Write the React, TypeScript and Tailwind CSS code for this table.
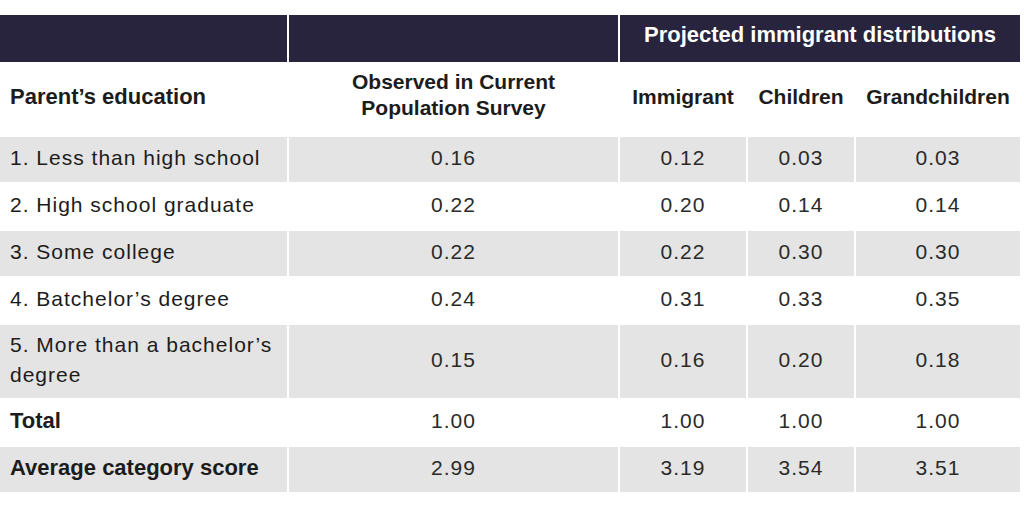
import React from "react";

const rows: { label: string; vals: string[]; bold?: boolean; gray: boolean; tall?: boolean }[] = [
  { label: "1. Less than high school", vals: ["0.16", "0.12", "0.03", "0.03"], gray: true },
  { label: "2. High school graduate", vals: ["0.22", "0.20", "0.14", "0.14"], gray: false },
  { label: "3. Some college", vals: ["0.22", "0.22", "0.30", "0.30"], gray: true },
  { label: "4. Batchelor\u2019s degree", vals: ["0.24", "0.31", "0.33", "0.35"], gray: false },
  { label: "5. More than a bachelor\u2019s degree", vals: ["0.15", "0.16", "0.20", "0.18"], gray: true, tall: true },
  { label: "Total", vals: ["1.00", "1.00", "1.00", "1.00"], gray: false, bold: true },
  { label: "Average category score", vals: ["2.99", "3.19", "3.54", "3.51"], gray: true, bold: true },
];

export default function App() {
  return (
    <div
      className="w-[1024px] h-[512px] bg-white overflow-hidden pt-[15px] text-[#1c1c1c]"
      style={{ fontFamily: '"Liberation Sans", Arial, sans-serif' }}
    >
      <div className="grid w-[1020px] grid-cols-[287px_329px_126px_106px_164px] gap-x-[2px] gap-y-[2px]">
        {/* dark header */}
        <div className="h-[47px] bg-[#29243d]" />
        <div className="h-[47px] bg-[#29243d]" />
        <div className="col-span-3 h-[47px] bg-[#29243d] flex items-center justify-center pb-[9px] text-white font-bold text-[22px]">
          Projected immigrant distributions
        </div>
        {/* sub header */}
        <div className="h-[71px] flex items-center pl-[10px] pb-[6px] font-bold text-[22px]">Parent’s education</div>
        <div className="h-[71px] flex items-center justify-center pb-[10px] text-center font-bold text-[21px] leading-[26px]">
          Observed in Current
          <br />
          Population Survey
        </div>
        <div className="h-[71px] flex items-center justify-center pb-[6px] font-bold text-[21px]">Immigrant</div>
        <div className="h-[71px] flex items-center justify-center pb-[6px] font-bold text-[21px]">Children</div>
        <div className="h-[71px] flex items-center justify-center pb-[6px] font-bold text-[21px]">Grandchildren</div>
        {rows.map((r) => (
          <React.Fragment key={r.label}>
            <div
              className={`${r.tall ? "h-[73px]" : "h-[45px]"} ${r.gray ? "bg-[#e4e4e4]" : "bg-white"} flex items-center pl-[10px] pr-2 pb-[3px] leading-[30px] ${r.bold ? "font-bold text-[22px]" : "text-[21px] tracking-[1px]"}`}
            >
              {r.label}
            </div>
            {r.vals.map((v, i) => (
              <div
                key={i}
                className={`${r.tall ? "h-[73px]" : "h-[45px]"} ${r.gray ? "bg-[#e4e4e4]" : "bg-white"} flex items-center justify-center pb-[3px] text-[21px] tracking-[1px] text-[#2a2a2a]`}
              >
                {v}
              </div>
            ))}
          </React.Fragment>
        ))}
      </div>
    </div>
  );
}
